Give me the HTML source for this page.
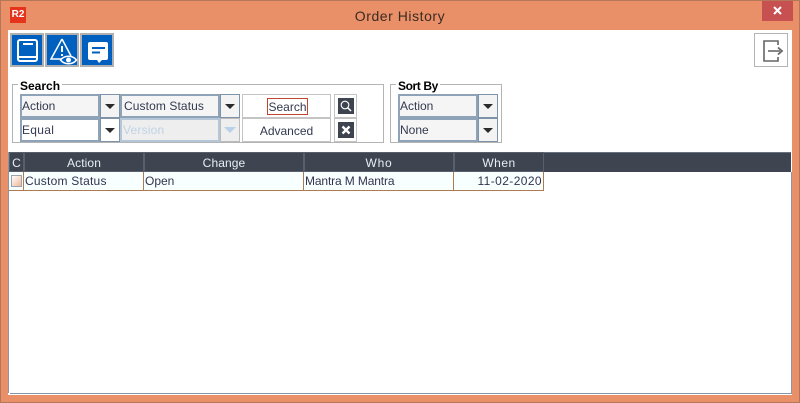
<!DOCTYPE html>
<html><head><meta charset="utf-8"><style>
html,body{margin:0;padding:0}
body{width:800px;height:403px;overflow:hidden;position:relative;background:#ea9068;font-family:"Liberation Sans",sans-serif;font-size:12px;color:#33334f}
div,svg{position:absolute;box-sizing:border-box}
.t{white-space:nowrap;line-height:16px}
.f{border:2px solid #8ea2b8;background:#f5f5f5;padding-left:0;line-height:20px;color:#333a50;white-space:nowrap}
.a{border:1px solid #7f93a8;background:#f3f3f3}
.a:after{content:"";position:absolute;top:9px;left:4px;border:5px solid transparent;border-top:5px solid #2a2a2a;border-bottom:0}
.b{border:1px solid #c4c4c4;background:#fff;text-align:center;line-height:24px;color:#333a50}
.g{border:1px solid #b4b4b4}
.l{font-weight:bold;color:#000;background:#fff;padding:0 2px;line-height:14px;top:79px}
.h{background:#3e4550;border:1px solid #59606c;color:#e8eef4;text-align:center;line-height:20px;top:152px;height:20px;letter-spacing:.1px}
.c{top:172px;height:19px;background:#f8ffff;border-bottom:1px solid #b07a50;border-right:1px solid #b07a50;line-height:18px;padding-left:1px;color:#33334f;white-space:nowrap}
.i{background:#0060bf;border:2px solid #b0b0b0;top:33px;width:34px;height:34px}
</style></head><body>
<div style="left:0;top:0;width:800px;height:403px;border:1px solid #b5775a"></div>
<div style="left:10px;top:7px;width:16px;height:16px;background:#e5341c;color:#fff;font-weight:bold;font-size:10px;line-height:16px;text-align:center">R2</div>
<div class="t" style="left:300px;width:200px;top:8px;text-align:center;font-size:14px;color:#3a2a22;letter-spacing:.55px">Order History</div>
<div style="left:762px;top:1px;width:31px;height:20px;background:#c75050"></div>
<svg style="left:762px;top:1px" width="31" height="20"><path d="M12 6l7 7M19 6l-7 7" stroke="#fff" stroke-width="2"/></svg>

<div style="left:8px;top:30px;width:784px;height:365px;background:#fff"></div>
<div style="left:8px;top:152px;width:1px;height:241px;background:#8795a8"></div>
<div style="left:10px;top:393px;width:782px;height:1px;background:#8795a8"></div>
<div style="left:791px;top:172px;width:1px;height:222px;background:#8795a8"></div>

<div class="i" style="left:10px"></div>
<svg style="left:11px;top:34px" width="32" height="32" fill="none" stroke="#fff" stroke-width="2"><rect x="7" y="6" width="19" height="21" rx="2"/><path d="M7 23h19M12 10h10"/></svg>
<div class="i" style="left:45px"></div>
<svg style="left:46px;top:34px" width="32" height="32" fill="none" stroke="#fff" stroke-width="1.500"><path d="M16 5L5 25h10M16 5l9 17"/><path d="M16 12v6M16 20v2" stroke-width="2"/><path d="M14.500 26c4-5 12-5 16 0c-4 5-12 5-16 0z"/><circle cx="22.500" cy="26" r="2.500" fill="#fff" stroke="none"/></svg>
<div class="i" style="left:80px"></div>
<svg style="left:81px;top:34px" width="32" height="32"><path d="M9 8h16a2 2 0 0 1 2 2v14a2 2 0 0 1-2 2h-4l-3 3-2-3H9a2 2 0 0 1-2-2V10a2 2 0 0 1 2-2z" fill="#fff"/><path d="M11 14h13M11 18.500h8" stroke="#0060bf" stroke-width="2"/></svg>

<div style="left:754px;top:33px;width:34px;height:34px;border:1px solid #b4b4b4"></div>
<svg style="left:754px;top:33px" width="34" height="34" fill="none" stroke="#666" stroke-width="1.600"><path d="M24 12V8H10v20h14v-4"/><path d="M14 18h12" stroke="#888" stroke-width="2"/><path d="M24 14.500l4 3.500-4 3.500" stroke-width="1.800"/></svg>

<div class="g" style="left:12px;top:84px;width:372px;height:59px"></div>
<div class="t l" style="left:18px">Search</div>
<div class="f" style="left:20px;top:94px;width:80px;height:24px">Action</div><div class="a" style="left:100px;top:94px;width:20px;height:24px"></div>
<div class="f" style="left:120px;top:94px;width:100px;height:24px;padding-left:2px;letter-spacing:.1px">Custom Status</div><div class="a" style="left:220px;top:94px;width:20px;height:24px"></div>
<div class="f" style="left:20px;top:118px;width:80px;height:24px;background:#fff;letter-spacing:.3px">Equal</div><div class="a" style="left:100px;top:118px;width:20px;height:24px;background:#fff"></div>
<div class="f" style="left:120px;top:118px;width:100px;height:24px;background:#eee;color:#c0d2e6;border-color:#b4c6d8;padding-left:1px;letter-spacing:.2px">Version</div>
<div style="left:220px;top:118px;width:20px;height:24px;border:1px solid #bbb;background:#eee"></div>
<div style="left:224px;top:127px;border:6px solid transparent;border-top:6px solid #b8d0e8;border-bottom:0"></div>
<div class="b" style="left:242px;top:94px;width:89px;height:24px"></div>
<div class="t" style="left:267px;top:98px;width:41px;height:17px;border:1px solid #c0472c;text-align:center;line-height:16px;color:#333a50">Search</div>
<div class="b" style="left:242px;top:118px;width:89px;height:24px">Advanced</div>
<div class="b" style="left:334px;top:94px;width:23px;height:24px"></div>
<div class="b" style="left:334px;top:118px;width:23px;height:24px"></div>
<div style="left:338px;top:98px;width:16px;height:16px;background:#3d4450"></div>
<svg style="left:338px;top:98px" width="16" height="16" fill="none" stroke="#fff" stroke-width="1.100"><circle cx="7" cy="7" r="3.800"/><path d="M9.700 9.700l3.300 3.300" stroke-width="1.500"/></svg>
<div style="left:338px;top:122px;width:16px;height:16px;background:#3d4450"></div>
<svg style="left:338px;top:122px" width="16" height="16"><path d="M4.500 4.500l7 7M11.500 4.500l-7 7" stroke="#fff" stroke-width="2.400"/></svg>

<div class="g" style="left:390px;top:84px;width:112px;height:59px"></div>
<div class="t l" style="left:396px;letter-spacing:-.4px">Sort By</div>
<div class="f" style="left:398px;top:94px;width:80px;height:24px">Action</div><div class="a" style="left:478px;top:94px;width:20px;height:24px"></div>
<div class="f" style="left:398px;top:118px;width:80px;height:24px">None</div><div class="a" style="left:478px;top:118px;width:20px;height:24px"></div>

<div style="left:9px;top:152px;width:782px;height:20px;background:#3e4550;border-top:1px solid #687180"></div>
<div class="h" style="left:9px;width:15px">C</div>
<div class="h" style="left:24px;width:120px">Action</div>
<div class="h" style="left:144px;width:160px">Change</div>
<div class="h" style="left:304px;width:150px;letter-spacing:.8px">Who</div>
<div class="h" style="left:454px;width:90px;letter-spacing:.5px">When</div>

<div class="c" style="left:9px;width:15px"></div>
<div style="left:11px;top:175px;width:11px;height:12px;border:1px solid #9aa4b0;background:linear-gradient(135deg,#fff,#f0b898)"></div>
<div class="c" style="left:24px;width:120px;letter-spacing:.23px">Custom Status</div>
<div class="c" style="left:144px;width:160px">Open</div>
<div class="c" style="left:304px;width:150px;letter-spacing:-.13px">Mantra M Mantra</div>
<div class="c" style="left:454px;width:90px;text-align:right;padding-right:1px;letter-spacing:.4px">11-02-2020</div>
</body></html>
